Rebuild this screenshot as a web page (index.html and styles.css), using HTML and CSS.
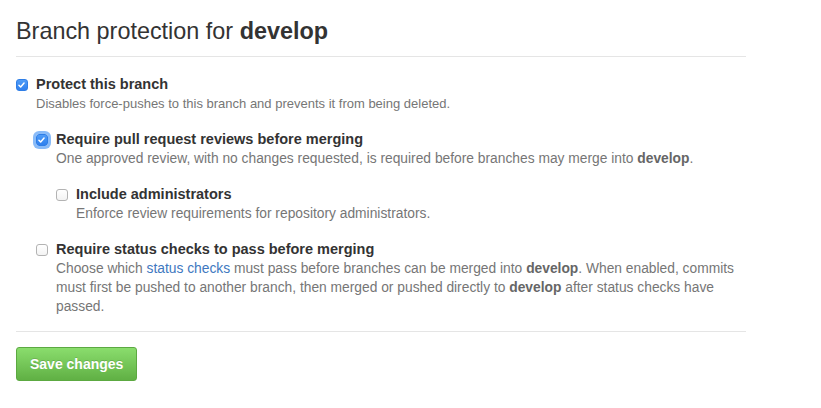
FILE: index.html
```html
<!DOCTYPE html>
<html>
<head>
<meta charset="utf-8">
<link rel="stylesheet" href="styles.css">
</head>
<body>
<div class="page">
  <h2 class="title">Branch protection for <strong>develop</strong></h2>

  <div class="option">
    <span class="cb checked"><svg viewBox="0 0 12 12" width="12" height="12"><path d="M3.2 6.3 L5.1 8.2 L8.8 3.9" fill="none" stroke="#fff" stroke-width="1.6" stroke-linecap="round" stroke-linejoin="round"/></svg></span>
    <div class="body">
      <div class="label">Protect this branch</div>
      <p class="note note-top">Disables force-pushes to this branch and prevents it from being deleted.</p>

      <div class="option">
        <span class="cb checked focus"><svg viewBox="0 0 12 12" width="12" height="12"><path d="M3.2 6.3 L5.1 8.2 L8.8 3.9" fill="none" stroke="#fff" stroke-width="1.6" stroke-linecap="round" stroke-linejoin="round"/></svg></span>
        <div class="body">
          <div class="label">Require pull request reviews before merging</div>
          <p class="note">One approved review, with no changes requested, is required before branches may merge into <strong>develop</strong>.</p>

          <div class="option">
            <span class="cb"></span>
            <div class="body">
              <div class="label">Include administrators</div>
              <p class="note">Enforce review requirements for repository administrators.</p>
            </div>
          </div>
        </div>
      </div>

      <div class="option">
        <span class="cb"></span>
        <div class="body">
          <div class="label">Require status checks to pass before merging</div>
          <p class="note">Choose which <a href="#" class="link">status checks</a> must pass before branches can be merged into <strong>develop</strong>. When enabled, commits must first be pushed to another branch, then merged or pushed directly to <strong>develop</strong> after status checks have passed.</p>
        </div>
      </div>
    </div>
  </div>

  <div class="actions">
    <button class="btn-primary" type="button">Save changes</button>
  </div>
</div>
</body>
</html>
```

FILE: styles.css
```css
html, body {
  margin: 0;
  padding: 0;
  background: #fff;
}

body {
  font-family: "Liberation Sans", Arial, sans-serif;
  color: #333;
  font-size: 14px;
}

.page {
  width: 730px;
  padding: 13px 0 0 16px;
}

.title {
  margin: 0;
  font-size: 23.4px;
  font-weight: normal;
  line-height: 36px;
  padding-bottom: 7px;
  border-bottom: 1px solid #e5e5e5;
  color: #333;
}

.title strong {
  font-weight: bold;
}

.page > .option {
  margin-top: 18px;
}

.option {
  display: flex;
  align-items: flex-start;
  gap: 8px;
}

.body .option {
  margin-top: 17px;
}

.body {
  flex: 1;
  min-width: 0;
}

.cb {
  flex: none;
  width: 12px;
  height: 12px;
  margin-top: 4px;
  box-sizing: border-box;
  border-radius: 3px;
  border: 1px solid #b3b3b3;
  background: linear-gradient(#fff, #f3f3f3);
  display: flex;
}

.cb.checked {
  border-color: #2f7ee6;
  background: linear-gradient(#4f9cf7, #2f80ee);
}

.cb.checked svg {
  margin: -1px 0 0 -1px;
}

.cb.focus {
  box-shadow: 0 0 0 3px rgba(98, 164, 245, 0.75);
  border-radius: 3px;
}

.label {
  font-size: 14.5px;
  font-weight: bold;
  line-height: 19px;
  color: #333;
}

.note {
  margin: 0;
  font-size: 13.8px;
  line-height: 19px;
  color: #767676;
}

.note-top {
  font-size: 13px;
}

.note strong {
  color: #666;
}

.link {
  color: #4078c0;
  text-decoration: none;
}

.actions {
  margin-top: 15px;
  padding-top: 15px;
  border-top: 1px solid #e5e5e5;
}

.btn-primary {
  font-family: "Liberation Sans", Arial, sans-serif;
  font-size: 14px;
  font-weight: bold;
  color: #fff;
  height: 34px;
  padding: 0 13px;
  border: 1px solid #5ca941;
  border-radius: 3px;
  background: linear-gradient(#8add6d, #60b044);
  text-shadow: 0 -1px 0 rgba(0, 0, 0, 0.15);
  cursor: pointer;
}
```
